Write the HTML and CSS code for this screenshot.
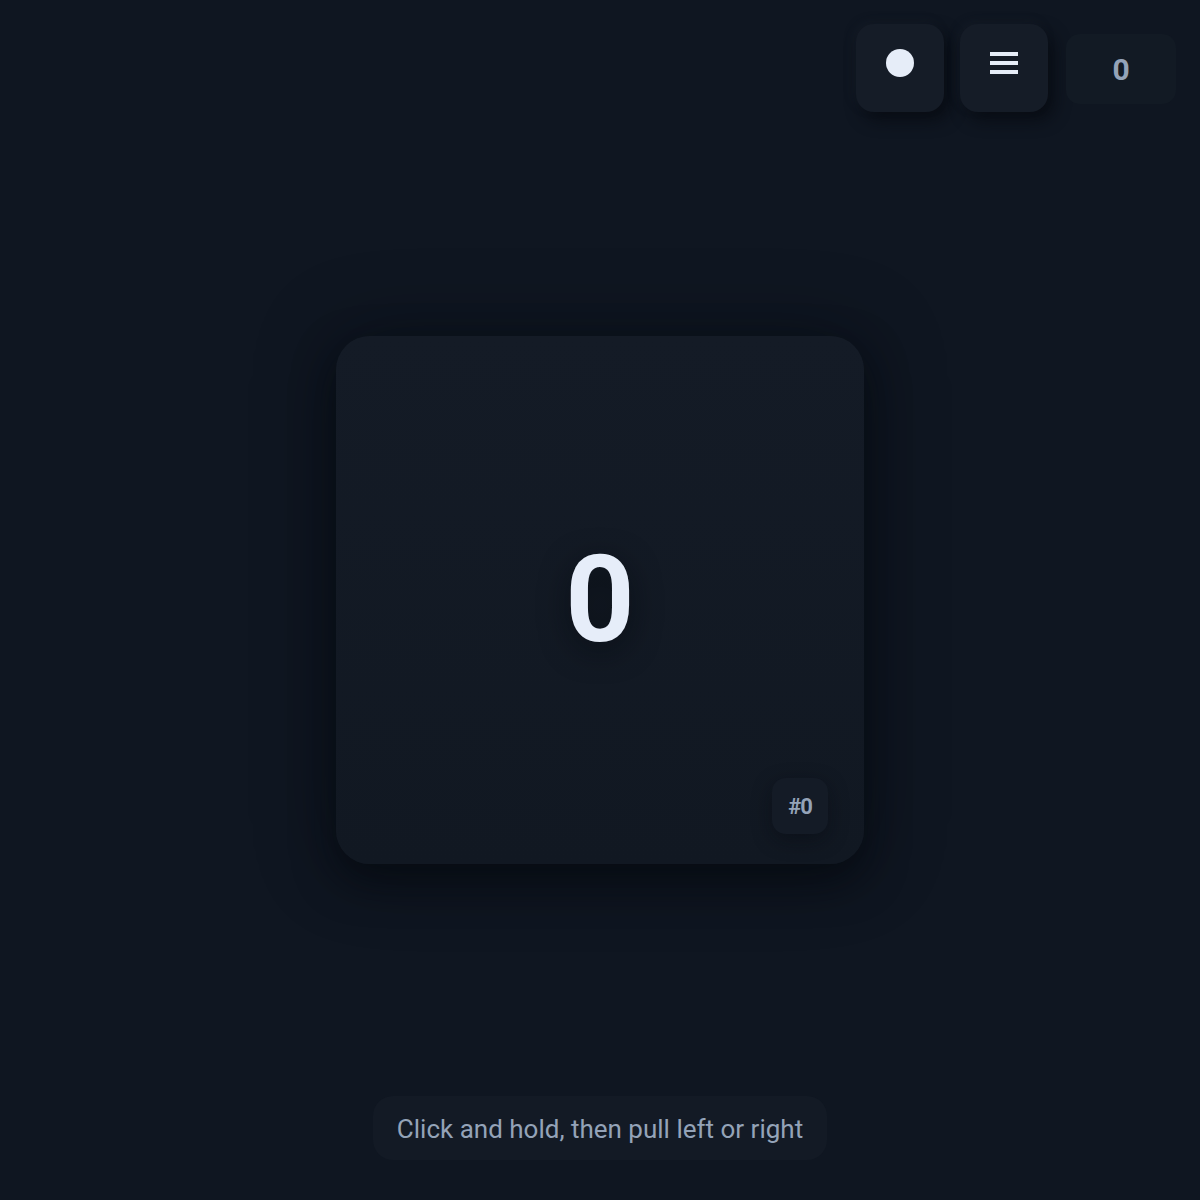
FILE: index.html
```html
<!DOCTYPE html>
<html>
<head>
<meta charset="utf-8">
<link rel="stylesheet" href="styles.css">
</head>
<body>
<div class="app">
  <header class="topbar">
    <button class="icon-btn" aria-label="Theme">
      <svg width="30" height="30" viewBox="0 0 30 30"><circle cx="15" cy="15" r="14" fill="#e6edf8"/></svg>
    </button>
    <button class="icon-btn" aria-label="Menu">
      <svg width="28" height="22" viewBox="0 0 28 22"><rect x="0" y="0" width="28" height="4" fill="#e6edf8"/><rect x="0" y="9" width="28" height="4" fill="#e6edf8"/><rect x="0" y="18" width="28" height="4" fill="#e6edf8"/></svg>
    </button>
    <div class="total">0</div>
  </header>
  <main class="stage">
    <div class="card">
      <div class="value">0</div>
      <div class="tag">#0</div>
    </div>
  </main>
  <footer class="hint-row">
    <div class="hint">Click and hold, then pull left or right</div>
  </footer>
</div>
</body>
</html>
```
FILE: styles.css
```css
html, body {
  margin: 0;
  padding: 0;
  background: #0f1621;
  font-family: Roboto, "Noto Sans", sans-serif;
}
.app {
  width: 1200px;
  height: 1200px;
  display: flex;
  flex-direction: column;
  position: relative;
}
.topbar {
  display: flex;
  justify-content: flex-end;
  align-items: flex-start;
  gap: 16px;
  padding: 24px 24px 0 0;
  height: 88px;
}
.icon-btn {
  width: 88px;
  height: 88px;
  border: none;
  border-radius: 18px;
  background: #151c27;
  box-shadow: 6px 8px 16px rgba(5, 8, 14, 0.7), -3px -3px 10px rgba(30, 38, 50, 0.25);
  display: flex;
  align-items: center;
  justify-content: center;
  padding: 0 0 10px 0;
}
.total {
  margin-top: 10px;
  margin-left: 2px;
  width: 110px;
  height: 70px;
  border-radius: 14px;
  background: #121a24;
  color: #94a3b8;
  font-size: 30px;
  font-weight: 700;
  display: flex;
  align-items: center;
  justify-content: center;
}
.stage {
  flex: 1;
  display: flex;
  align-items: flex-start;
  justify-content: center;
  padding-top: 224px;
}
.card {
  width: 528px;
  height: 528px;
  border-radius: 34px;
  background: linear-gradient(180deg, #141b26 0%, #111822 100%);
  box-shadow: 0 16px 40px rgba(6, 9, 15, 0.75), 0 0 80px rgba(6, 9, 15, 0.35);
  position: relative;
  display: flex;
  align-items: center;
  justify-content: center;
}
.value {
  color: #e6edf9;
  font-size: 121px;
  font-weight: 700;
  line-height: 1;
  margin-top: 0;
  text-shadow: 0 8px 30px rgba(5, 8, 14, 0.6);
}
.tag {
  position: absolute;
  right: 36px;
  bottom: 30px;
  width: 56px;
  height: 56px;
  border-radius: 14px;
  background: #141b26;
  box-shadow: 0 6px 20px rgba(6, 9, 15, 0.45);
  color: #94a3b8;
  font-size: 22px;
  font-weight: 700;
  letter-spacing: -1px;
  display: flex;
  align-items: center;
  justify-content: center;
}
.hint-row {
  display: flex;
  justify-content: center;
  padding-bottom: 40px;
}
.hint {
  height: 64px;
  padding: 0 24px;
  border-radius: 20px;
  background: #131a25;
  color: #94a3b8;
  font-size: 26px;
  display: flex;
  align-items: center;
  padding-top: 2px;
  box-sizing: border-box;
}
```
